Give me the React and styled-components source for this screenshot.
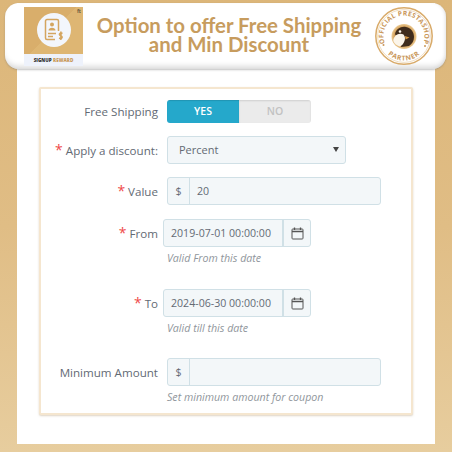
import React from 'react'
import styled, { createGlobalStyle } from 'styled-components'

const Global = createGlobalStyle`
  html, body { margin: 0; padding: 0; }
  body { width: 452px; height: 452px; overflow: hidden; font-family: "Open Sans", sans-serif; }
`

const Page = styled.div`
  box-sizing: border-box;
  width: 452px;
  height: 452px;
  padding-top: 3px;
  background: linear-gradient(180deg, #dcb679 0%, #e0bd85 50%, #e7cd9e 100%);
`

const Header = styled.header`
  box-sizing: border-box;
  position: relative;
  z-index: 1;
  display: flex;
  align-items: center;
  width: 441px;
  height: 66px;
  margin-left: 5px;
  padding: 0 13px 0 19px;
  background: #fff;
  border-radius: 14px;
  box-shadow: inset 0 -6px 6px -4px #d2d2d2, inset -3px 0 4px -3px #d8d8d8, 0 1px 2px rgba(120, 120, 120, 0.45);
`

const Logo = styled.div`
  display: flex;
  flex-direction: column;
  flex: none;
  width: 59px;
  height: 59px;
`

const LogoArt = styled.div`
  position: relative;
  display: flex;
  align-items: center;
  justify-content: center;
  height: 47px;
  background: linear-gradient(135deg, #d9ae6b 50%, #deb673 50%);
`

const LogoMark = styled.span`
  position: absolute;
  top: 1px;
  right: 2px;
  font: 700 5px "Open Sans", sans-serif;
  color: #6a5a40;
`

const LogoCircle = styled.div`
  display: flex;
  align-items: center;
  justify-content: center;
  width: 34px;
  height: 34px;
  border-radius: 50%;
  background: #f3f6fc;
`

const LogoCaption = styled.div`
  display: flex;
  align-items: center;
  justify-content: center;
  gap: 1.5px;
  height: 12px;
  background: #eef2fb;
  font: 800 4.6px "Open Sans", sans-serif;
  color: #333;
`

const LogoAccent = styled.span`
  color: #c9995a;
`

const Title = styled.h1`
  flex: 1;
  margin: 0;
  padding-bottom: 3px;
  font: 700 20.4px/19px Lato, sans-serif;
  text-align: center;
  color: #c79c5e;
`

const Panel = styled.main`
  box-sizing: border-box;
  width: 418px;
  height: 441px;
  margin: -66px 0 0 17px;
  padding: 84px 22px 0;
  background: #fff;
`

const Card = styled.section`
  box-sizing: border-box;
  width: 374px;
  height: 328px;
  padding: 8px 0 0;
  background: #fff;
  border: 2px solid #f5e6cf;
  border-radius: 2px;
  box-shadow: 0 1px 2px rgba(190, 170, 140, 0.5);
`

const Row = styled.div`
  display: flex;
  align-items: center;
  height: 28px;
  margin-bottom: ${p => p.$gap || 0}px;
`

const Label = styled.label`
  flex: none;
  width: 117px;
  font-size: 11.6px;
  text-align: right;
  color: #636a74;
`

const Star = styled.span`
  margin-right: 3px;
  font-size: 14px;
  line-height: 10px;
  color: #ef4a4a;
`

const Control = styled.div`
  flex: none;
  margin-left: ${p => p.$date ? 5 : 9}px;
`

const Switch = styled.div`
  display: flex;
  width: 144px;
  height: 23px;
  border-radius: 3px;
  overflow: hidden;
`

const SwitchPart = styled.div`
  display: flex;
  flex: ${p => p.$on ? '0 0 72px' : '1'};
  align-items: center;
  justify-content: center;
  font-size: 10.5px;
  font-weight: 600;
  color: ${p => p.$on ? '#fff' : '#c2c2c2'};
  background: ${p => p.$on ? '#25a8cb' : '#ebebeb'};
  box-shadow: ${p => p.$on ? 'inset 0 1px 1px rgba(0,0,0,.12)' : 'inset 0 1px 2px rgba(0,0,0,.12)'};
`

const InputGroup = styled.div`
  box-sizing: border-box;
  display: flex;
  align-items: stretch;
  width: ${p => p.$width}px;
  height: 28px;
  background: #f3f7f9;
  border: 1.5px solid #d0e0e6;
  border-radius: 3px;
  font-size: 10.6px;
  color: #636a74;
`

const Addon = styled.div`
  display: flex;
  flex: none;
  align-items: center;
  justify-content: center;
  width: ${p => p.$width}px;
  border-left: ${p => p.$end ? '2px solid #d0e0e6' : 'none'};
  border-right: ${p => p.$end ? 'none' : '1px solid #d0e0e6'};
`

const Field = styled.div`
  display: flex;
  flex: 1;
  align-items: center;
  justify-content: ${p => p.$between ? 'space-between' : 'flex-start'};
  padding: 0 ${p => p.$between ? 6 : 7}px ${p => p.$between ? 1 : 0}px ${p => p.$between ? 11 : 7}px;
  font-size: ${p => p.$between ? 11 : 10.6}px;
  white-space: nowrap;
`

const Caret = styled.span`
  width: 0;
  height: 0;
  border-left: 3px solid transparent;
  border-right: 3px solid transparent;
  border-top: 5px solid #444;
`

const Hint = styled.p`
  margin: 4px 0 ${p => p.$gap || 0}px 126px;
  font-size: 10.65px;
  font-style: italic;
  line-height: 14px;
  color: #90969c;
`

function CalendarIcon() {
  return (
    <svg width="13" height="13" viewBox="0 0 13 13" fill="none" stroke="#555" strokeWidth="1">
      <rect x="1" y="2" width="11" height="10" rx="0.8" />
      <path d="M1 4.5h11" strokeWidth="1.5" />
      <path d="M3.5 0.5v2.5M9.5 0.5v2.5" strokeWidth="1.3" />
    </svg>
  )
}

function DocumentIcon() {
  return (
    <svg width="20" height="25" viewBox="0 0 20 25" fill="none" stroke="#d4a55f" strokeWidth="1.5">
      <path d="M14.5 13V3A1.5 1.5 0 0 0 13 1.5H3A1.5 1.5 0 0 0 1.5 3v17A1.5 1.5 0 0 0 3 21.5h8" />
      <circle cx="8" cy="6.5" r="2" fill="#d4a55f" stroke="none" />
      <path d="M4.5 12.5c0-3.6 7-3.6 7 0z" fill="#d4a55f" stroke="none" />
      <path d="M4 15.5h8M4 18.5h5" />
      <path d="M18.5 15.5c-2.5-1.4-4.3 1.3-1.9 2.2 2.700.8 1.500 3.700-1.500 2.300M16.900 13.500v8.500" strokeWidth="1.6" />
    </svg>
  )
}

function Badge() {
  return (
    <svg width="58" height="60" viewBox="0 0 58 60">
      <defs>
        <path id="badgeTop" d="M13.300 43.200a20.500 20.500 0 1 1 31.400 0" />
        <path id="badgeBottom" d="M7.800 42.200a24.500 24.500 0 0 0 42.400 0" />
        <radialGradient id="medal">
          <stop offset="75%" stopColor="#cf9b55" />
          <stop offset="100%" stopColor="#eccb94" />
        </radialGradient>
      </defs>
      <circle cx="29" cy="30" r="28.200" fill="#fff" stroke="#d9ab6a" strokeWidth="1.500" />
      <circle cx="29" cy="30" r="26.400" fill="none" stroke="#e0bd88" strokeWidth="0.500" />
      <text fontFamily="Open Sans" fontWeight="700" fontSize="6.600" fill="#c9975a" letterSpacing="0.300">
        <textPath href="#badgeTop" startOffset="50%" textAnchor="middle">OFFICIAL PRESTASHOP</textPath>
      </text>
      <text fontFamily="Open Sans" fontWeight="700" fontSize="6.700" fill="#c9975a" letterSpacing="0.600">
        <textPath href="#badgeBottom" startOffset="50%" textAnchor="middle">PARTNER</textPath>
      </text>
      <circle cx="8.500" cy="39" r="1" fill="#c9975a" />
      <circle cx="50" cy="40" r="1" fill="#c9975a" />
      <circle cx="29" cy="30.500" r="12.500" fill="url(#medal)" />
      <path d="M20 28c1-5 6-8 11-7 5 1 8 5 8 10 0 4-2 7-5 9l-8 1c1-3 0-6-2-8-2-3-4-4-4-5z" fill="#3f2c1c" />
      <path d="M19.500 31c2-3 6-4 9-2.500 1.500 2 2 4 1 6.500-1 3-3 5-5 5.500-3-1-5-3-6-5-.5-1.500 0-3 1-4.500z" fill="#fbf5ea" />
      <circle cx="25" cy="25.500" r="1.300" fill="#fbf5ea" />
      <path d="M30 30l4.500 1.500-4 2z" fill="#d99a45" />
    </svg>
  )
}

export default function App() {
  return (
    <Page>
      <Global />
      <Header>
        <Logo>
          <LogoArt>
            <LogoMark>ft</LogoMark>
            <LogoCircle><DocumentIcon /></LogoCircle>
          </LogoArt>
          <LogoCaption>SIGNUP <LogoAccent>REWARD</LogoAccent></LogoCaption>
        </Logo>
        <Title>Option to offer Free Shipping<br />and Min Discount</Title>
        <Badge />
      </Header>
      <Panel>
        <Card>
          <Row $gap={11}>
            <Label>Free Shipping</Label>
            <Control>
              <Switch>
                <SwitchPart $on>YES</SwitchPart>
                <SwitchPart>NO</SwitchPart>
              </Switch>
            </Control>
          </Row>
          <Row $gap={13}>
            <Label><Star>*</Star>Apply a discount:</Label>
            <Control>
              <InputGroup $width={179}>
                <Field $between>Percent<Caret /></Field>
              </InputGroup>
            </Control>
          </Row>
          <Row $gap={14}>
            <Label><Star>*</Star>Value</Label>
            <Control>
              <InputGroup $width={214}>
                <Addon $width={21}>$</Addon>
                <Field>20</Field>
              </InputGroup>
            </Control>
          </Row>
          <Row>
            <Label><Star>*</Star>From</Label>
            <Control $date>
              <InputGroup $width={148}>
                <Field>2019-07-01 00:00:00</Field>
                <Addon $width={26} $end><CalendarIcon /></Addon>
              </InputGroup>
            </Control>
          </Row>
          <Hint $gap={24}>Valid From this date</Hint>
          <Row>
            <Label><Star>*</Star>To</Label>
            <Control $date>
              <InputGroup $width={148}>
                <Field>2024-06-30 00:00:00</Field>
                <Addon $width={26} $end><CalendarIcon /></Addon>
              </InputGroup>
            </Control>
          </Row>
          <Hint $gap={23}>Valid till this date</Hint>
          <Row>
            <Label>Minimum Amount</Label>
            <Control>
              <InputGroup $width={214}>
                <Addon $width={21}>$</Addon>
                <Field />
              </InputGroup>
            </Control>
          </Row>
          <Hint>Set minimum amount for coupon</Hint>
        </Card>
      </Panel>
    </Page>
  )
}
